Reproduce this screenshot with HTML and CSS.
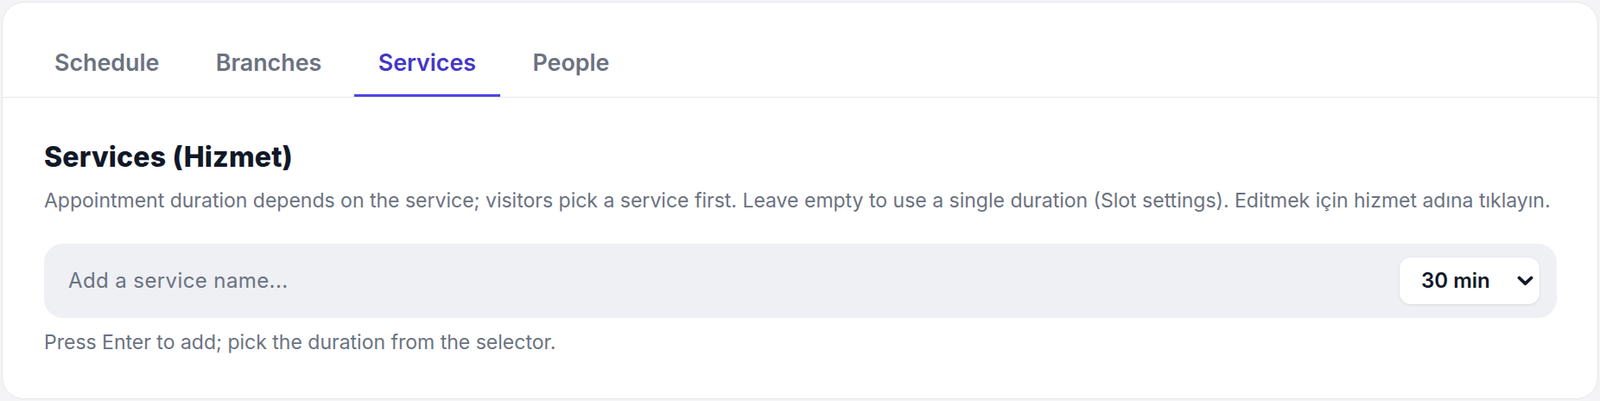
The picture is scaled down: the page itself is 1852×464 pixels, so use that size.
FILE: index.html
```html
<!DOCTYPE html>
<html lang="en">
<head>
<meta charset="utf-8">
<title>Services</title>
<link rel="stylesheet" href="styles.css">
</head>
<body>
<div class="card">
  <nav class="tabs">
    <div class="tab">Schedule</div>
    <div class="tab">Branches</div>
    <div class="tab tab-active">Services</div>
    <div class="tab">People</div>
  </nav>
  <section class="panel">
    <h2 class="title">Services (Hizmet)</h2>
    <p class="desc">Appointment duration depends on the service; visitors pick a service first. Leave empty to use a single duration (Slot settings). Editmek için hizmet adına tıklayın.</p>
    <div class="add-row">
      <input class="add-input" type="text" placeholder="Add a service name...">
      <div class="duration">
        <span class="duration-value">30 min</span>
        <svg class="chevron" width="19" height="12" viewBox="0 0 19 12" aria-hidden="true"><path d="M2.5 2.5 L9.5 9.2 L16.5 2.5" fill="none" stroke="#111827" stroke-width="3.8" stroke-linecap="round" stroke-linejoin="round"/></svg>
      </div>
    </div>
    <p class="hint">Press Enter to add; pick the duration from the selector.</p>
  </section>
</div>
</body>
</html>
```

FILE: styles.css
```css
* { box-sizing: border-box; }

html, body {
  margin: 0;
  padding: 0;
}

body {
  background: #f4f4f6;
  padding: 2px;
  font-family: Inter, "Noto Sans", "Liberation Sans", sans-serif;
  color: #111827;
}

.card {
  background: #ffffff;
  border: 1px solid #e6e7eb;
  border-radius: 26px;
  overflow: hidden;
}

.tabs {
  display: flex;
  gap: 9.5px;
  padding: 32px 32px 0;
  border-bottom: 1px solid #e8e9ed;
}

.tab {
  padding: 21px 28px;
  font-size: 26.8px;
  line-height: 32px;
  font-weight: 600;
  color: #6b7280;
  border-bottom: 3px solid transparent;
}

.tab-active {
  color: #4536c6;
  border-bottom-color: #4f46e5;
}

.panel {
  padding: 49px 47px 50px 48px;
}

.title {
  margin: 0;
  font-size: 32px;
  line-height: 40px;
  font-weight: 800;
  letter-spacing: 0.2px;
  color: #111827;
}

.desc {
  margin: 15px 0 0;
  font-size: 23px;
  line-height: 30px;
  color: #6b7280;
}

.add-row {
  margin-top: 35px;
  display: flex;
  align-items: center;
  gap: 16px;
  background: #eef0f4;
  border-radius: 22px;
  padding: 16px 20px 16px 28px;
}

.add-input {
  flex: 1;
  min-width: 0;
  border: 0;
  outline: 0;
  background: transparent;
  padding: 0;
  font-family: inherit;
  font-size: 24px;
  letter-spacing: 0.4px;
  line-height: 32px;
  color: #111827;
}

.add-input::placeholder {
  color: #6b7280;
  opacity: 1;
}

.duration {
  display: flex;
  align-items: center;
  width: 162px;
  height: 54px;
  padding: 0 7px 0 25px;
  background: #ffffff;
  border-radius: 13px;
  box-shadow: 0 1px 3px rgba(17, 24, 39, 0.08), 0 0 0 1px rgba(17, 24, 39, 0.02);
}

.duration-value {
  font-size: 24px;
  line-height: 32px;
  font-weight: 600;
  color: #111827;
}

.chevron {
  margin-left: auto;
  display: block;
}

.hint {
  margin: 13px 0 0;
  font-size: 23px;
  line-height: 30px;
  color: #6b7280;
}
```
